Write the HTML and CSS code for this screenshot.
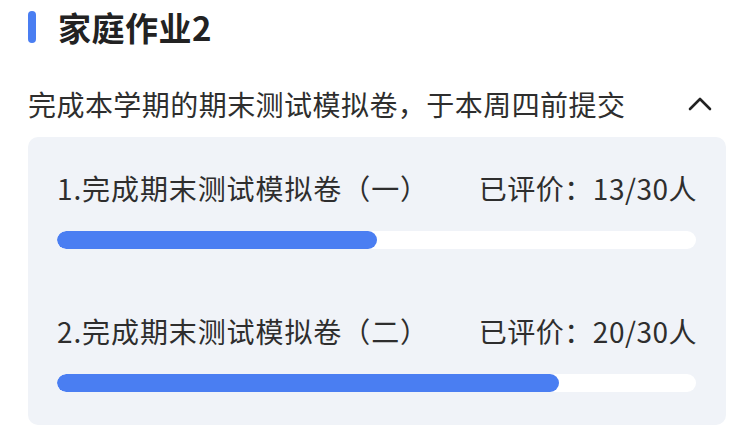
FILE: index.html
```html
<!DOCTYPE html>
<html lang="zh">
<head>
<meta charset="utf-8">
<link rel="stylesheet" href="styles.css">
</head>
<body>
<div class="page">
  <div class="header">
    <span class="mark"></span>
    <h1 class="title">家庭作业2</h1>
  </div>
  <div class="sub">
    <span class="sub-text">完成本学期的期末测试模拟卷，于本周四前提交</span>
    <svg class="chev" width="26" height="16" viewBox="0 0 26 16"><path d="M3 13 L13 3 L23 13" fill="none" stroke="#222" stroke-width="2.6" stroke-linecap="round" stroke-linejoin="round"/></svg>
  </div>
  <div class="card">
    <div class="item">
      <div class="row">
        <span class="name">1.完成期末测试模拟卷（一）</span>
        <span class="stat">已评价：13/30人</span>
      </div>
      <div class="track"><div class="fill" style="width:50%"></div></div>
    </div>
    <div class="item item2">
      <div class="row">
        <span class="name">2.完成期末测试模拟卷（二）</span>
        <span class="stat">已评价：20/30人</span>
      </div>
      <div class="track"><div class="fill" style="width:78.6%"></div></div>
    </div>
  </div>
</div>
</body>
</html>
```
FILE: styles.css
```css
* { box-sizing: border-box; }
html, body { margin: 0; padding: 0; background: #fff; }
body {
  font-family: "Noto Sans CJK SC", "Noto Sans", sans-serif;
  color: #333;
  width: 750px;
  height: 445px;
  overflow: hidden;
}
.page { padding: 7px 24px 0 28px; }
.header {
  display: flex;
  align-items: center;
  height: 40px;
}
.mark {
  width: 8px;
  height: 32px;
  border-radius: 4px;
  background: #4a7ef2;
  margin-right: 22px;
}
.title {
  margin: 0;
  font-size: 33px;
  line-height: 40px;
  font-weight: 700;
  color: #222;
  letter-spacing: 0.5px;
}
.sub {
  margin-top: 37px;
  display: flex;
  align-items: center;
  justify-content: space-between;
  height: 40px;
  padding-right: 13px;
}
.sub-text {
  font-size: 28px;
  line-height: 40px;
  color: #2e2e2e;
  letter-spacing: 0.45px;
}
.chev { display: block; }
.card {
  margin-top: 13px;
  background: #f0f3f8;
  border-radius: 10px;
  padding: 31px 30px 33px 29px;
}
.row {
  display: flex;
  justify-content: space-between;
  align-items: center;
  height: 40px;
  font-size: 28px;
  line-height: 40px;
  color: #2e2e2e;
}
.name { letter-spacing: 0.9px; }
.stat { letter-spacing: 0.5px; margin-right: -1px; }
.track {
  margin-top: 23px;
  height: 18px;
  border-radius: 9px;
  background: #fff;
  overflow: hidden;
}
.fill {
  height: 100%;
  border-radius: 9px;
  background: #4a7ef2;
}
.item2 { margin-top: 62px; }
```
